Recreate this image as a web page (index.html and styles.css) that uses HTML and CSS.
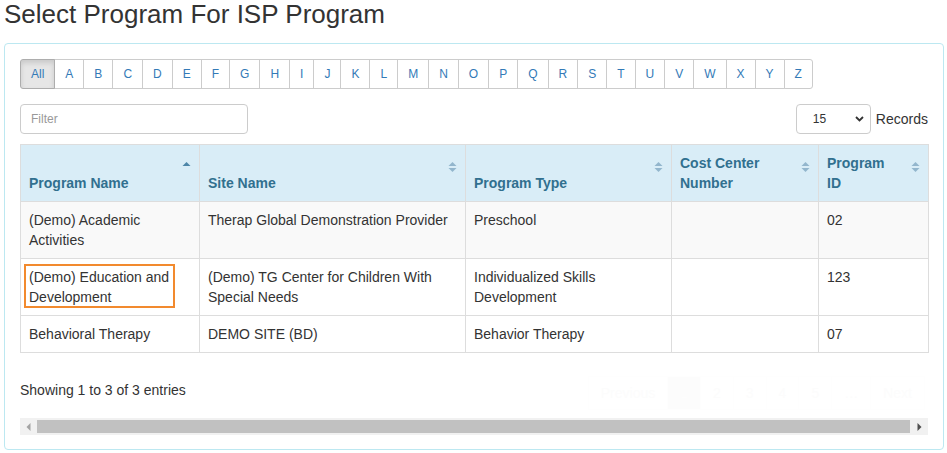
FILE: index.html
```html
<!DOCTYPE html>
<html>
<head>
<meta charset="utf-8">
<link rel="stylesheet" href="styles.css">
</head>
<body>
<h1 class="title">Select Program For ISP Program</h1>
<div class="panel">
  <div class="alpha">
    <span class="alpha-btn active">All</span><span class="alpha-btn">A</span><span class="alpha-btn">B</span><span class="alpha-btn">C</span><span class="alpha-btn">D</span><span class="alpha-btn">E</span><span class="alpha-btn">F</span><span class="alpha-btn">G</span><span class="alpha-btn">H</span><span class="alpha-btn">I</span><span class="alpha-btn">J</span><span class="alpha-btn">K</span><span class="alpha-btn">L</span><span class="alpha-btn">M</span><span class="alpha-btn">N</span><span class="alpha-btn">O</span><span class="alpha-btn">P</span><span class="alpha-btn">Q</span><span class="alpha-btn">R</span><span class="alpha-btn">S</span><span class="alpha-btn">T</span><span class="alpha-btn">U</span><span class="alpha-btn">V</span><span class="alpha-btn">W</span><span class="alpha-btn">X</span><span class="alpha-btn">Y</span><span class="alpha-btn last">Z</span>
  </div>
  <div class="toolbar">
    <div class="filter">Filter</div>
    <div class="records">
      <div class="select"><span>15</span><svg width="9" height="6" viewBox="0 0 9 6"><polyline points="1,1 4.5,4.5 8,1" fill="none" stroke="#333" stroke-width="1.8"/></svg></div>
      <span class="records-label">Records</span>
    </div>
  </div>
  <table class="grid">
    <colgroup><col class="c1"><col class="c2"><col class="c3"><col class="c4"><col class="c5"></colgroup>
    <thead>
      <tr>
        <th>Program Name<svg class="sort on" width="9" height="12" viewBox="0 0 9 12"><polygon points="0.5,5 4.5,1 8.5,5"/></svg></th>
        <th>Site Name<svg class="sort" width="9" height="12" viewBox="0 0 9 12"><polygon points="0.5,5 4.5,1 8.5,5"/><polygon points="0.5,7 4.5,11 8.5,7"/></svg></th>
        <th>Program Type<svg class="sort" width="9" height="12" viewBox="0 0 9 12"><polygon points="0.5,5 4.5,1 8.5,5"/><polygon points="0.5,7 4.5,11 8.5,7"/></svg></th>
        <th>Cost Center Number<svg class="sort" width="9" height="12" viewBox="0 0 9 12"><polygon points="0.5,5 4.5,1 8.5,5"/><polygon points="0.5,7 4.5,11 8.5,7"/></svg></th>
        <th>Program ID<svg class="sort" width="9" height="12" viewBox="0 0 9 12"><polygon points="0.5,5 4.5,1 8.5,5"/><polygon points="0.5,7 4.5,11 8.5,7"/></svg></th>
      </tr>
    </thead>
    <tbody>
      <tr class="odd">
        <td>(Demo) Academic Activities</td>
        <td>Therap Global Demonstration Provider</td>
        <td>Preschool</td>
        <td></td>
        <td>02</td>
      </tr>
      <tr>
        <td class="hl">(Demo) Education and Development<span class="mark"></span></td>
        <td>(Demo) TG Center for Children With Special Needs</td>
        <td>Individualized Skills Development</td>
        <td></td>
        <td>123</td>
      </tr>
      <tr>
        <td>Behavioral Therapy</td>
        <td>DEMO SITE (BD)</td>
        <td>Behavior Therapy</td>
        <td></td>
        <td>07</td>
      </tr>
    </tbody>
  </table>
  <div class="footer">
    <div class="info">Showing 1 to 3 of 3 entries</div>
    <div class="pager">
      <span class="pg">Previous</span><span class="pg cur">1</span><span class="pg">2</span><span class="pg">3</span><span class="pg">4</span><span class="pg">5</span><span class="pg">…</span><span class="pg">Next</span>
    </div>
  </div>
  <div class="hscroll">
    <span class="arr"><svg width="5" height="8" viewBox="0 0 5 8"><polygon points="4.5,0 0.5,4 4.5,8" fill="#a3a3a3"/></svg></span>
    <span class="thumb"></span>
    <span class="arr"><svg width="5" height="8" viewBox="0 0 5 8"><polygon points="0.5,0 4.5,4 0.5,8" fill="#505050"/></svg></span>
  </div>
</div>
</body>
</html>
```
FILE: styles.css
```css
* { box-sizing: border-box; }
body {
  margin: 0;
  font-family: "Liberation Sans", Arial, sans-serif;
  font-size: 14px;
  line-height: 20px;
  color: #333;
  background: #fff;
}
.title {
  margin: 0;
  padding-left: 4px;
  font-size: 26px;
  line-height: 29px;
  font-weight: normal;
  color: #333;
}
.panel {
  margin: 14px 0 0 4px;
  width: 940px;
  border: 1px solid #bce8f1;
  border-radius: 4px;
  padding: 15px 15px 14px 15px;
}
.alpha {
  display: flex;
}
.alpha-btn {
  display: block;
  height: 30px;
  padding: 5px 10px;
  font-size: 12px;
  line-height: 18px;
  color: #337ab7;
  border: 1px solid #ccc;
  margin-left: -1px;
  background: #fff;
}
.alpha-btn.active {
  margin-left: 0;
  background: #e6e6e6;
  border-color: #adadad;
  border-radius: 3px 0 0 3px;
  box-shadow: inset 0 3px 5px rgba(0,0,0,.125);
  position: relative;
  z-index: 1;
}
.alpha-btn.last { border-radius: 0 3px 3px 0; }
.toolbar {
  margin-top: 15px;
  display: flex;
  justify-content: space-between;
  align-items: center;
}
.filter {
  width: 228px;
  height: 30px;
  border: 1px solid #ccc;
  border-radius: 4px;
  padding: 0 10px;
  font-size: 12px;
  line-height: 28px;
  color: #999;
}
.records {
  display: flex;
  align-items: center;
}
.select {
  width: 75px;
  height: 30px;
  border: 1px solid #ccc;
  border-radius: 4px;
  display: flex;
  align-items: center;
  justify-content: space-between;
  padding: 0 6px 0 16px;
  font-size: 12px;
  color: #333;
}
.records-label {
  margin-left: 5px;
  font-size: 14px;
}
.grid {
  margin-top: 10px;
  width: 908px;
  border-collapse: collapse;
  table-layout: fixed;
}
.c1 { width: 179px; }
.c2 { width: 266px; }
.c3 { width: 206px; }
.c4 { width: 147px; }
.c5 { width: 110px; }
.grid th, .grid td {
  border: 1px solid #ddd;
  padding: 8px;
  text-align: left;
  vertical-align: top;
  line-height: 20px;
}
.grid th {
  position: relative;
  background: #d9edf7;
  color: #31708f;
  font-weight: bold;
  vertical-align: bottom;
  padding-right: 30px;
}
.sort {
  position: absolute;
  right: 8px;
  top: 16px;
  fill: #93b6cd;
}
.sort.on { fill: #4d86a8; }
.grid tr.odd td { background: #f9f9f9; }
.grid td.hl { position: relative; }
.mark {
  position: absolute;
  left: 3px;
  top: 5px;
  width: 151px;
  height: 44px;
  border: 2px solid #f28a2e;
}
.footer {
  margin-top: 23px;
  display: flex;
  justify-content: space-between;
  align-items: flex-start;
}
.info { padding-top: 4px; }
.pager {
  display: flex;
  margin-right: 3px;
}
.pg {
  display: block;
  padding: 6px 12px;
  line-height: 20px;
  border: 1px solid #fefefe;
  margin-left: -1px;
  color: #fcfcfc;
}
.pg.cur { background: #fcfcfc; color: #fdfdfd; }
.hscroll {
  margin-top: 8px;
  height: 17px;
  background: #f1f1f1;
  display: flex;
  align-items: center;
}
.arr {
  width: 17px;
  height: 17px;
  display: flex;
  align-items: center;
  justify-content: center;
}
.thumb {
  flex: 1;
  height: 13px;
  background: #c1c1c1;
  margin-right: 1px;
}
```
